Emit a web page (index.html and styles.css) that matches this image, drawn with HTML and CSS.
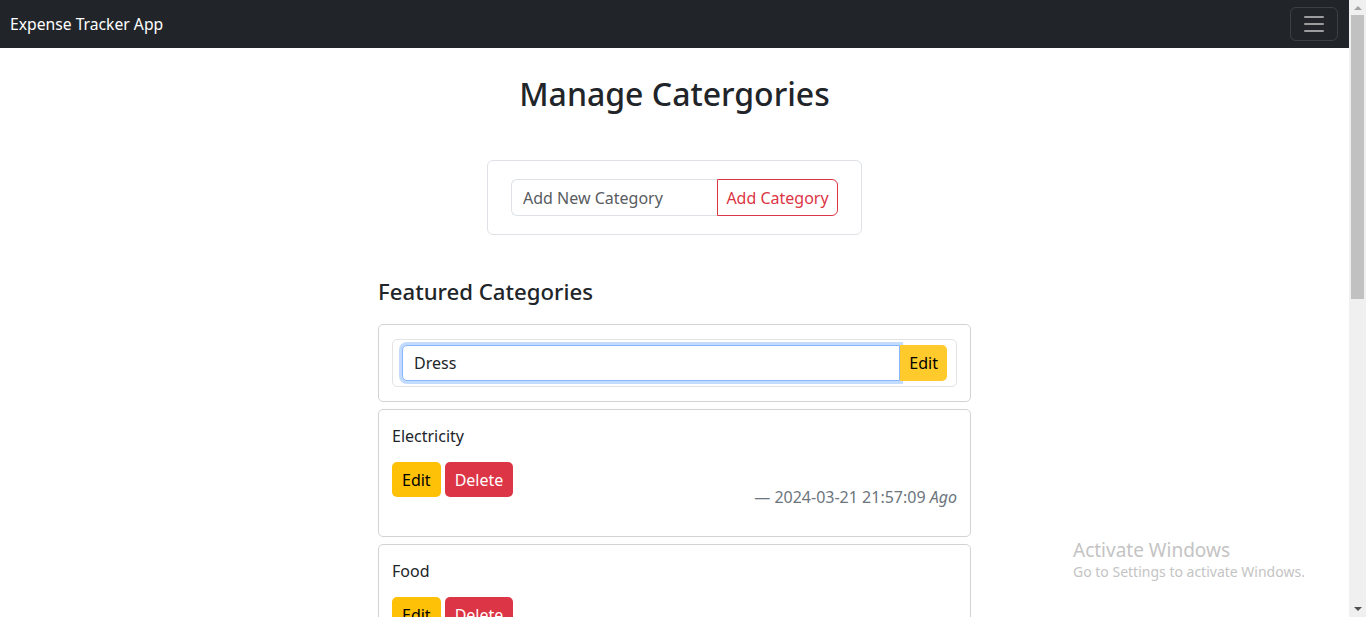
FILE: index.html
```html
<!DOCTYPE html>
<html lang="en">
<head>
<meta charset="utf-8">
<title>Expense Tracker App</title>
<link rel="stylesheet" href="styles.css">
</head>
<body>
<div class="window">
  <div class="page">
    <nav class="navbar">
      <span class="brand">Expense Tracker App</span>
      <button class="toggler" aria-label="menu">
        <span class="bar"></span><span class="bar"></span><span class="bar"></span>
      </button>
    </nav>
    <main class="main">
      <h2 class="title">Manage Catergories</h2>
      <div class="add-card">
        <div class="input-group">
          <input class="add-input" type="text" placeholder="Add New Category">
          <button class="btn-outline-danger">Add Category</button>
        </div>
      </div>
      <section class="list">
        <h4 class="list-title">Featured Categories</h4>
        <div class="card">
          <div class="edit-box">
            <input class="edit-input" type="text" value="Dress">
            <button class="btn btn-warning-light">Edit</button>
          </div>
        </div>
        <div class="card">
          <p class="cat-name">Electricity</p>
          <div class="card-row">
            <div class="actions">
              <button class="btn btn-warning">Edit</button>
              <button class="btn btn-danger">Delete</button>
            </div>
            <div class="meta">— 2024-03-21 21:57:09 <em>Ago</em></div>
          </div>
        </div>
        <div class="card">
          <p class="cat-name">Food</p>
          <div class="card-row">
            <div class="actions">
              <button class="btn btn-warning">Edit</button>
              <button class="btn btn-danger">Delete</button>
            </div>
            <div class="meta">— 2024-03-21 21:57:09 <em>Ago</em></div>
          </div>
        </div>
      </section>
    </main>
    <div class="watermark">
      <div class="wm-title">Activate Windows</div>
      <div class="wm-sub">Go to Settings to activate Windows.</div>
    </div>
  </div>
  <div class="scrollbar">
    <div class="arrow-up"></div>
    <div class="thumb"></div>
    <div class="track"></div>
    <div class="arrow-down"></div>
  </div>
</div>
</body>
</html>
```

FILE: styles.css
```css
* { box-sizing: border-box; }
html, body { margin: 0; padding: 0; height: 100%; overflow: hidden; }
body {
  font-family: "Noto Sans", "Open Sans", sans-serif;
  font-size: 16px;
  color: #212529;
  background: #fff;
}
.window { display: flex; height: 617px; }
.page { flex: 1; position: relative; overflow: hidden; }

.navbar {
  height: 48px;
  background: #212529;
  display: flex;
  align-items: center;
  justify-content: space-between;
  padding: 0 11px 0 10px;
}
.brand { color: #fff; font-size: 15.7px; line-height: 24px; }
.toggler {
  width: 48px; height: 34px;
  background: transparent;
  border: 1px solid rgba(255,255,255,0.12);
  border-radius: 6px;
  display: flex; flex-direction: column; align-items: center; justify-content: center;
  gap: 5px; padding: 0;
}
.bar { display: block; width: 20px; height: 2px; background: rgba(255,255,255,0.55); border-radius: 1px; }

.main { display: flex; flex-direction: column; align-items: center; }
.title {
  margin: 26px 0 0;
  font-size: 32px; font-weight: 500; line-height: 40px;
}
.add-card {
  margin-top: 46px;
  width: 375px;
  border: 1px solid #dee2e6;
  border-radius: 6px;
  padding: 18px 23px;
}
.input-group { display: flex; height: 37px; }
.add-input {
  width: 206px; flex: none;
  border: 1px solid #dee2e6; border-right: 0;
  border-radius: 6px 0 0 6px;
  padding: 0 11px;
  font: inherit; color: #212529;
}
.add-input::placeholder { color: #595c5f; }
.btn-outline-danger {
  flex: 1;
  white-space: nowrap;
  background: #fff;
  border: 1px solid #dc3545;
  border-radius: 0 6px 6px 0;
  color: #dc3545;
  font: inherit; padding: 0 6px;
}

.list { width: 593px; margin-top: 42px; }
.list-title { margin: 0 0 17px; font-size: 22.2px; font-weight: 500; line-height: 30px; }
.card {
  border: 1px solid #d3d3d3;
  border-radius: 5px;
  padding: 14px 13px;
  margin-bottom: 7px;
}
.edit-box {
  border: 1px solid #e3e3e3;
  border-radius: 5px;
  padding: 5px 9px;
  display: flex;
}
.edit-input {
  flex: 1; height: 36px;
  border: 1px solid #86b7fe;
  border-radius: 5px 0 0 5px;
  box-shadow: 0 0 0 3px rgba(13,110,253,0.25);
  padding: 0 11px;
  font: inherit; color: #212529;
  outline: none;
}
.btn {
  height: 35px;
  border: 0; border-radius: 5px;
  font: inherit; padding: 0 10px;
}
.btn-warning-light { background: #ffca2c; color: #000; height: 36px; border-radius: 0 5px 5px 0; padding: 0 9px; }
.btn-warning { background: #ffc107; color: #000; }
.btn-danger { background: #dc3545; color: #fff; }
.cat-name { margin: 0 0 14px; line-height: 24px; }
.card-row { display: flex; justify-content: space-between; align-items: flex-start; }
.actions { display: flex; gap: 4px; }
.meta { margin-top: 23px; margin-bottom: 13px; color: #6c757d; line-height: 24px; }

.watermark {
  position: absolute; left: 1073px; top: 538px;
  font-family: "Noto Sans", sans-serif; color: #c4c4c4;
}
.wm-title { font-size: 19px; line-height: 24px; }
.wm-sub { font-size: 14px; line-height: 20px; }

.scrollbar {
  width: 17px; flex: none;
  background: #f0f0f0;
  display: flex; flex-direction: column; align-items: center;
}
.arrow-up {
  width: 0; height: 0; margin: 6px 0 5px;
  border-left: 4px solid transparent; border-right: 4px solid transparent;
  border-bottom: 4px solid #a3a3a3;
}
.thumb { width: 13px; height: 284px; background: #c1c1c1; }
.track { flex: 1; }
.arrow-down {
  width: 0; height: 0; margin: 5px 0 6px;
  border-left: 4px solid transparent; border-right: 4px solid transparent;
  border-top: 4px solid #505050;
}
```
